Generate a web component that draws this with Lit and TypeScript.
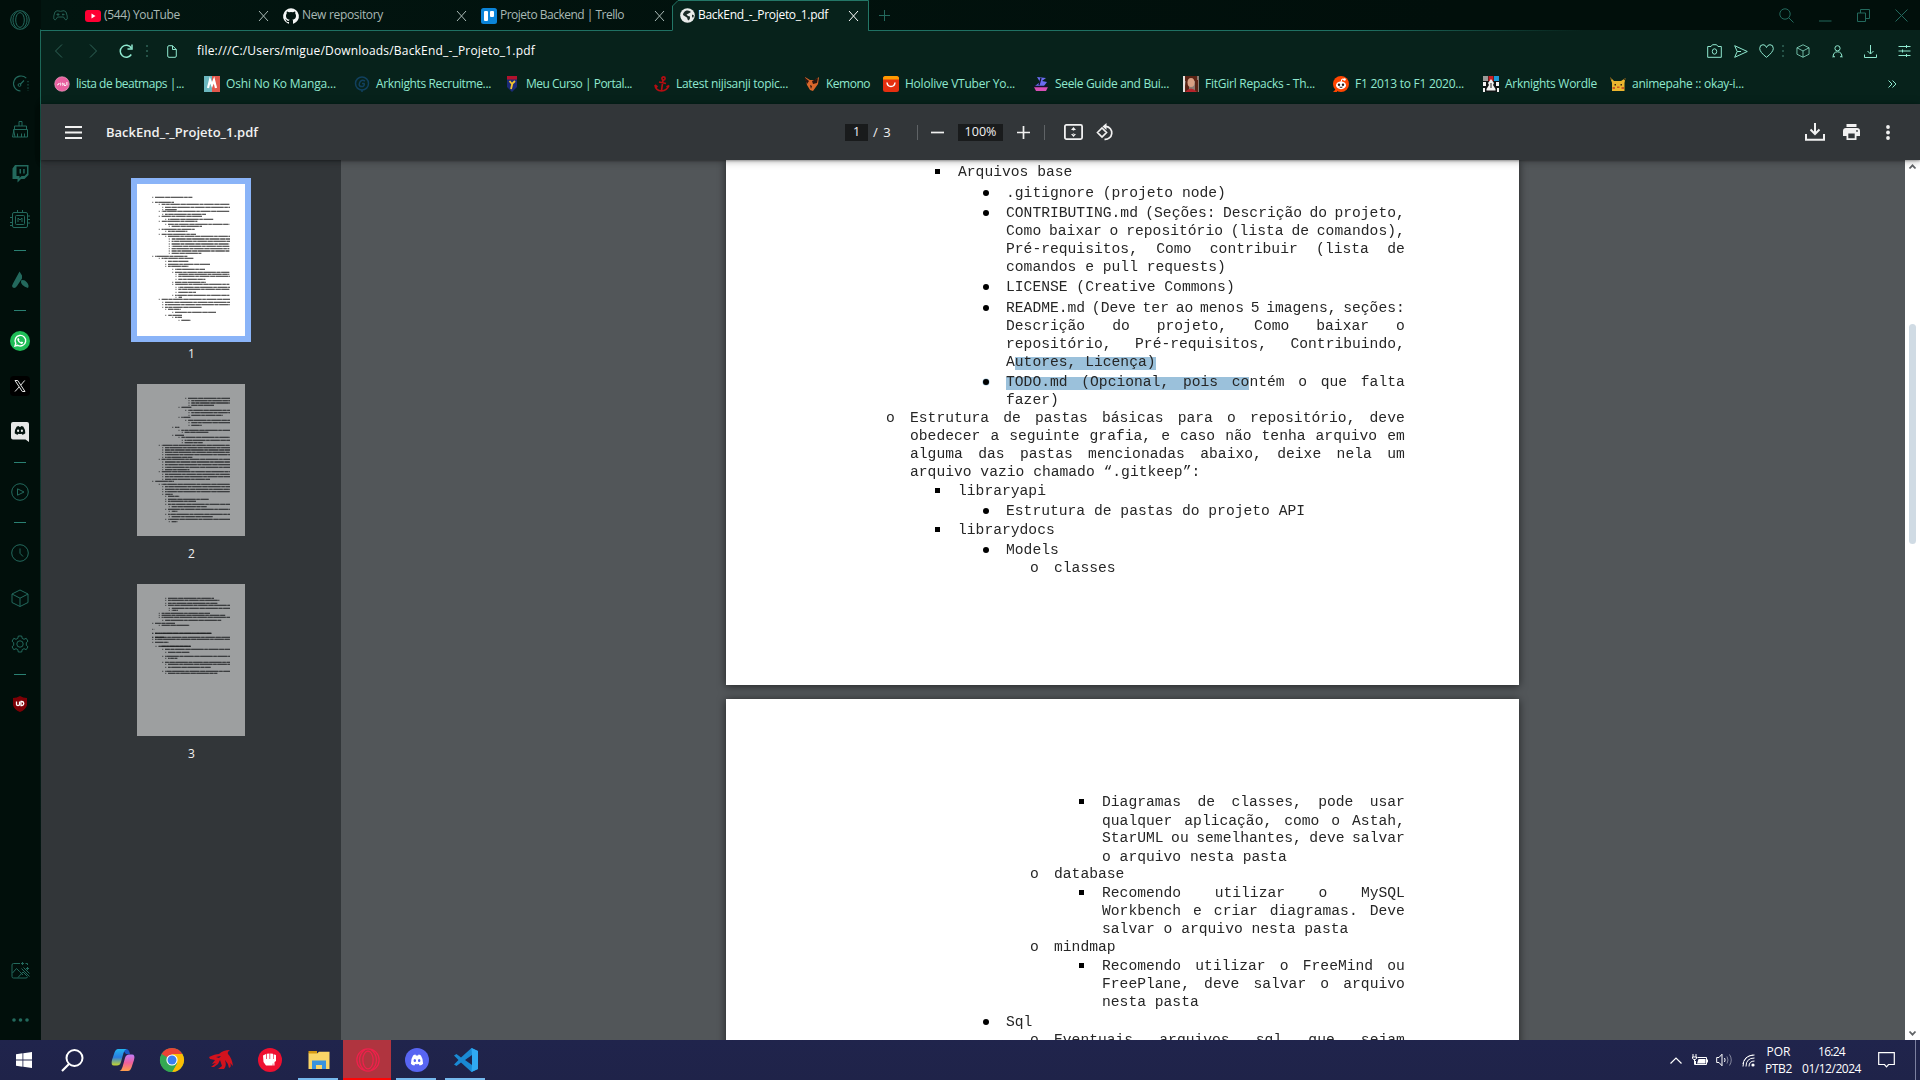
import { LitElement, html, css, svg, nothing } from "lit";
import type { TemplateResult } from "lit";
import { customElement } from "lit/decorators.js";

/* ---------- shared helpers ---------- */

type Art = ReturnType<typeof svg>;

const icon = (w: number, h: number, box: string, art: Art, cls = "") => html`
  <svg class="icon ${cls}" width=${w} height=${h} viewBox=${box} fill="none"
    stroke="currentColor" stroke-width="1">${art}</svg>`;

const fit = (text: string, width: number, cls = "") =>
  html`<span class="fit ${cls}" data-w=${width}>${text}</span>`;

const base = css`
  :host { display: block; box-sizing: border-box; font-family: "Open Sans", "Noto Sans", sans-serif; font-size: 12px; }
  * { box-sizing: border-box; }
  .icon { display: block; flex: none; overflow: visible; }
  .fit { display: block; white-space: nowrap; flex: none; line-height: 16px; }
`;

/** Spreads labels marked .fit over their stated width by letter spacing. */
class Surface extends LitElement {
  firstUpdated() {
    this.renderRoot.querySelectorAll<HTMLElement>(".fit").forEach((el) => {
      const want = Number(el.dataset.w);
      const range = document.createRange();
      range.selectNodeContents(el);
      const natural = range.getBoundingClientRect().width;
      const n = (el.textContent ?? "").length;
      el.style.letterSpacing = `${((want - natural) / n).toFixed(3)}px`;
      el.style.width = `${want}px`;
    });
  }
}

const closeX = svg`<path d="M1 1L10 11M10 1L1 11"/>`;
const cube = svg`<path d="M9 1L17 5V13.500L9 17.500L1 13.500V5ZM1 5L9 9.200L17 5M9 9.200V17.500"/>`;
const discordFace = svg`<path stroke="none" fill="currentColor" fill-rule="evenodd" d="M5 2.500Q6.500 1.700 8 1.500L8.600 2.600H11.400L12 1.500Q13.500 1.700 15 2.500Q18.200 7 17.800 12.300Q16 14 13.400 14.500L12.300 12.800Q10 13.400 7.700 12.800L6.600 14.500Q4 14 2.200 12.300Q1.800 7 5 2.500ZM7.200 6.700A1.600 1.800 0 1 0 7.210 10.300A1.600 1.800 0 1 0 7.200 6.700ZM12.800 6.700A1.600 1.800 0 1 0 12.810 10.300A1.600 1.800 0 1 0 12.800 6.700Z"/>`;
const operaMark = svg`<circle cx="10" cy="10" r="9.300"/><ellipse cx="10" cy="10" rx="4.300" ry="7.400"/><path d="M12.500 1.200Q17 4.500 17 10T12.500 18.800M7.500 1.200Q3 4.500 3 10T7.500 18.800"/>`;

/* ---------- left browser rail ---------- */

const rail: (TemplateResult | null)[] = [
  icon(17, 17, "0 0 17 17", svg`<path d="M8.500 16A7.500 7.500 0 1 1 14.300 3.200M8 9.500L12 5.500" stroke-width="1.100"/><circle cx="7.500" cy="10" r="1.400"/><path d="M16 6V16" stroke-dasharray="1.300 1.900"/>`),
  icon(17, 17, "0 0 17 17", svg`<path d="M2.500 8.500V5H14.500V8.500M1.500 8.500H15.500V16H3L1.500 8.500M7 5V.500H10V5M5.500 16V12.500M9.500 16V12.500M12.500 16V12.500M2 8.500L.500 16H3"/>`),
  icon(17, 18, "0 0 17 18", svg`<path stroke="none" fill="currentColor" fill-rule="evenodd" d="M3 0H16.500V10L12.500 14H9L5.500 17.500V14H.500V3.500ZM4.500 1.500V11H7.500V13L9.500 11H12.500L15 8.500V1.500ZM7.500 4H9V8.500H7.500ZM11.200 4H12.700V8.500H11.200Z"/>`),
  icon(20, 20, "0 0 20 20", svg`<rect x="2.500" y="2.500" width="15" height="15" rx="1.500"/><rect x="5.500" y="5.500" width="9" height="9" rx="1"/><path d="M8 12V8L10 10L12 8V12M7.500 0V2.500M12.500 0V2.500M4.500 17.500H8M0 7.500H2.500M0 12.500H2.500M17.500 6H20M17.500 9.500H20M17.500 13H20M0 15.500H2"/>`),
  null,
  icon(17, 18, "0 0 17 18", svg`<path stroke="none" fill="currentColor" d="M7.500.500L10 4.500V7.500L5 15Q3 17.800.800 16.500Q-.500 14.500 1 12.500ZM9 9.500Q12 8 15 11.500Q17.500 14.500 16 17Q12.500 16 10.500 14Q8.500 12 9 9.500Z"/>`),
  null,
  icon(20, 20, "0 0 20 20", svg`<circle cx="10" cy="10" r="10" fill="#1fbd57" stroke="none"/><path stroke="#fff" stroke-width="1.400" d="M5 15L5.800 12.300A5.300 5.300 0 1 1 7.800 14.300Z"/><path stroke="none" fill="#fff" d="M7.800 7.200L8.700 7L9.500 8.700L9 9.400Q9.700 10.700 11 11.200L11.700 10.500L13.200 11.300Q13 13 11.300 12.900Q8.200 12 7.300 9Q7.100 8 7.800 7.200Z"/>`),
  icon(20, 20, "0 0 20 20", svg`<rect width="20" height="20" rx="4" fill="#000" stroke="none"/><path stroke="#e8e8e8" stroke-width="1" d="M5 4.500H7.700L15 15.500H12.300ZM14.700 4.500L10.700 9.200M9.200 10.900L5 15.500"/>`),
  icon(18, 20, "0 0 18 20", svg`<path stroke="none" fill="#e6e8e7" d="M2 0H16Q18 0 18 2V20L14.500 17.500H2Q0 17.500 0 15.500V2Q0 0 2 0Z"/><g color="#04140f" transform="translate(2.200 3) scale(.68)">${discordFace}</g>`),
  null,
  icon(18, 18, "0 0 18 18", svg`<circle cx="9" cy="9" r="8.300"/><path d="M6.500 5.800V12.200L13 9Z"/>`),
  null,
  icon(18, 18, "0 0 18 18", svg`<circle cx="9" cy="9" r="8.300"/><path d="M9 4.500V9.300L12 12.500"/>`),
  icon(18, 18.500, "0 0 18 18.500", cube),
  icon(18, 18, "0 0 18 18", svg`<circle cx="9" cy="9" r="3.200"/><path d="M7.300 1H10.700L11.200 3.400L13 4.300L15.200 3.300L17 6.200L15.300 7.700V10.300L17 11.800L15.200 14.700L13 13.700L11.200 14.600L10.700 17H7.300L6.800 14.600L5 13.700L2.800 14.700L1 11.800L2.700 10.300V7.700L1 6.200L2.800 3.300L5 4.300L6.800 3.400Z" stroke-linejoin="round"/>`),
  null,
  icon(14, 16, "0 0 14 16", svg`<path stroke="none" fill="#7d0006" d="M7 0Q10 1.800 14 2V9Q13 13.500 7 16Q1 13.500 0 9V2Q4 1.800 7 0Z"/><path stroke="#fff" stroke-width="1.300" d="M3.500 5.500V8.500Q3.500 9.500 5 9.500T6.500 8.500V5.500M8 5.500V9.500H9Q10.800 9.300 10.800 7.500T9 5.500Z"/>`),
];

@customElement("side-rail")
class SideRail extends Surface {
  static styles = [base, css`
    :host { width: 41px; height: 1040px; display: flex; flex-direction: column; background: #010f0b; color: #23695d;
      border-right: 1px solid; border-image: linear-gradient(#010f0b 0 30px, #1d6b5b 31px, #16453c 300px, #0a2a23 600px, #02110d 900px) 1; }
    .brand { height: 40px; display: flex; align-items: center; justify-content: center; margin-bottom: 21px; }
    .slot { height: 45.400px; display: flex; align-items: center; justify-content: center; flex: none; }
    .rule { height: 15.200px; display: flex; align-items: center; justify-content: center; flex: none; }
    .rule::before { content: ""; width: 12px; height: 1px; background: #2a8072; }
    .foot { margin-top: auto; display: flex; flex-direction: column; align-items: center; gap: 39px; padding-bottom: 18px; }
  `];
  render() {
    return html`
      <div class="brand">${icon(20, 20, "0 0 20 20", operaMark)}</div>
      ${rail.map((r) => (r ? html`<div class="slot">${r}</div>` : html`<div class="rule"></div>`))}
      <div class="foot">
        ${icon(19, 17, "0 0 19 17", svg`<path d="M9 1.500H2.500Q1 1.500 1 3V14.500Q1 16 2.500 16H15Q16.500 16 16.500 14.500M1.500 11L5.500 6.500L8.500 9.500L12 13M7 15.500L12 10L16 14M10.500 6.500L18.500 14.500M12.500 5.500L18.500 11.500M11.500 0V3M10 1.500H13M14.500 1.500H16.500V3M16.500 5V8M15 6.500H18"/>`)}
        ${icon(17, 4, "0 0 17 4", svg`<g stroke="none" fill="currentColor"><circle cx="2" cy="2" r="1.800"/><circle cx="8.500" cy="2" r="1.800"/><circle cx="15" cy="2" r="1.800"/></g>`)}
      </div>`;
  }
}

/* ---------- tabs, address bar and bookmarks ---------- */

const globe = svg`<circle cx="7.500" cy="7.500" r="7.300" fill="#e9eceb" stroke="none"/><path stroke="none" fill="#1b2b27" d="M6.500 2.500Q9.500 2 11 4L8.500 5.500L6.500 6.500L8 8L10 8.500Q10.500 10.500 8.500 12.500Q7 11.500 7.200 9.800L3 7Q3 4 6.500 2.500ZM12 6.500L14 7.500L13 10Q11.500 8.500 12 6.500Z"/>`;

const tabs = [
  { text: "(544) YouTube", w: 76, art: svg`<rect x="0" y="2" width="16" height="12" rx="3" fill="#ff0033" stroke="none"/><path d="M6.500 5.500L10.500 8L6.500 10.500Z" fill="#fff" stroke="none"/>` },
  { text: "New repository", w: 81, art: svg`<path stroke="none" fill="#f4f6f5" d="M8 .300A7.900 7.900 0 0 0 5.500 15.700C5.900 15.800 6 15.500 6 15.300V13.900C3.800 14.400 3.300 12.900 3.300 12.900C3 12 2.500 11.700 2.500 11.700C1.700 11.200 2.500 11.200 2.500 11.200C3.300 11.200 3.700 12 3.700 12C4.400 13.200 5.600 12.900 6.100 12.700C6.100 12.200 6.300 11.800 6.600 11.600C4.800 11.400 3 10.700 3 7.700C3 6.800 3.300 6.100 3.800 5.500C3.700 5.300 3.500 4.500 3.900 3.400C3.900 3.400 4.600 3.200 6.100 4.200A7.500 7.500 0 0 1 9.900 4.200C11.400 3.200 12.100 3.400 12.100 3.400C12.500 4.500 12.300 5.300 12.200 5.500C12.700 6.100 13 6.800 13 7.700C13 10.700 11.200 11.400 9.400 11.600C9.700 11.800 10 12.300 10 13.100V15.300C10 15.500 10.100 15.800 10.500 15.700A7.900 7.900 0 0 0 8 .300Z"/>` },
  { text: "Projeto Backend | Trello", w: 124, art: svg`<rect width="16" height="16" rx="2.500" fill="#0b84d8" stroke="none"/><rect x="3" y="3" width="4" height="10" rx="1" fill="#fff" stroke="none"/><rect x="9" y="3" width="4" height="6" rx="1" fill="#fff" stroke="none"/>` },
];

const marks = [
  { text: "lista de beatmaps |...", w: 108, art: svg`<circle cx="8" cy="8" r="7.300" fill="#e8609f" stroke="#f7a9cb" stroke-width=".6"/><path stroke="#fff" stroke-width="1" d="M3 8.500A1 1 0 1 0 4.500 7M6.800 7Q5.200 7.300 6.400 8T6 9.400M9 7Q7.400 7.300 8.600 8T8.200 9.400M10 7V9.400H12M12.900 6V9.400"/>` },
  { text: "Oshi No Ko Manga...", w: 110, art: svg`<rect width="8" height="16" fill="#6cb8c0" stroke="none"/><rect x="8" width="8" height="16" fill="#e2574c" stroke="none"/><path stroke="#fff" stroke-width="2.200" d="M4 12L6 4L8 9L10 4L12 12"/>` },
  { text: "Arknights Recruitme...", w: 115, art: svg`<g stroke="#11405e" stroke-width="1.500"><circle cx="8" cy="7.500" r="6.500"/><path d="M11 5Q7 3 5.500 7T9 10.500Q11 9 10 7.500H8M8 14V16"/></g>` },
  { text: "Meu Curso | Portal...", w: 106, art: svg`<path stroke="none" fill="#1b2a78" d="M3 1H13V11L8 16L3 11Z"/><rect x="3" y="0" width="10" height="3.500" fill="#b3122c" stroke="none"/><path stroke="#f2c330" stroke-width="1.800" d="M5.500 5L8 8L11 5M8.500 7L7 13"/>` },
  { text: "Latest nijisanji topic...", w: 112, art: svg`<g stroke="#b50d12" stroke-width="1.700"><circle cx="9.500" cy="2.500" r="1.600"/><path d="M9 4L7.500 14.500M5 6L12 7.500M1 9Q1.500 14.500 7.500 15Q13 14.500 15 9.500M1 9L3.500 11M15 9.500L12.500 11"/></g>` },
  { text: "Kemono", w: 44, art: svg`<path stroke="none" fill="#d9672b" d="M1 1L6 4L11 4L15 1L14 8L9 15L6 14L3 9Z"/><path stroke="none" fill="#2a1510" d="M0 1L5 5L3 8ZM8 5L14 2L13 7L9 8ZM6 9L8 10L7 13Z"/>` },
  { text: "Hololive VTuber Yo...", w: 110, art: svg`<rect width="16" height="16" rx="2.500" fill="#e52f10" stroke="none"/><path d="M0 3.500V2.500Q0 0 2.500 0H13.500Q16 0 16 2.500V3.500Z" fill="#ff9b00" stroke="none"/><path stroke="#fff" stroke-width="1.500" d="M4 6.500Q4.500 10.500 8 10.500T12 6.500"/>` },
  { text: "Seele Guide and Bui...", w: 114, art: svg`<path stroke="none" fill="#6a6df0" d="M4 1L13 2L9 5L14 6L11 10H2L7 6Z"/><path stroke="none" fill="#d84fb4" d="M1 11H15L13 15H3Z"/><path stroke="#14122e" stroke-width="1.300" d="M8 2L6 9M0 10.500H15"/>` },
  { text: "FitGirl Repacks - Th...", w: 110, art: svg`<rect width="16" height="16" fill="#8a7a70" stroke="none"/><path stroke="none" fill="#5a2415" d="M1 0H14V5H1ZM3 4H6V16H1ZM12 4H15V16H12Z"/><ellipse cx="8" cy="6.500" rx="3.500" ry="4.500" fill="#d9a184" stroke="none"/><path stroke="none" fill="#b5242b" d="M2 16Q8 9 14 16Z"/><path stroke="none" fill="#e6e2de" d="M0 0H2V16H0Z"/>` },
  { text: "F1 2013 to F1 2020...", w: 109, art: svg`<circle cx="8" cy="8" r="8" fill="#ff4500" stroke="none"/><path d="M0 16L4 12V16Z" fill="#ff4500" stroke="none"/><ellipse cx="8" cy="9.300" rx="5" ry="3.900" fill="#fff" stroke="none"/><circle cx="11.500" cy="3.500" r="1.300" fill="#fff" stroke="none"/><path stroke="#fff" d="M8 6L9 3L11 3.500"/><g fill="#2a1a16" stroke="none"><circle cx="6" cy="8.800" r="1.200"/><circle cx="10" cy="8.800" r="1.200"/><path d="M5.800 10.800H10.200Q8 13 5.800 10.800Z"/></g>` },
  { text: "Arknights Wordle", w: 92, art: svg`<g stroke="none"><rect width="16" height="16" fill="#101414"/><rect width="5" height="5" fill="#9a9a98"/><rect x="5.500" width="5" height="5" fill="#c81f25"/><rect x="11" width="5" height="5" fill="#1a9ad6"/><path fill="#f2f2f0" d="M8 3L11 7L10 9L12.500 13V14.500H3.500V13L6 9L5 7ZM0 6H3V10H0ZM13 6H16V10H13ZM0 12H2V16H0ZM14 12H16V16H14Z"/><path fill="#222" d="M7.500 7H8.500V12H7.500Z"/></g>` },
  { text: "animepahe :: okay-i...", w: 112, art: svg`<path stroke="none" fill="#ecb62e" d="M0 1L4 5H11L15.500 2L14.500 7V15H2V7Z"/><path stroke="none" fill="#3c2a14" d="M0 1L2 3L1 4ZM15.500 2L13.500 3.200L15 4.500ZM4.500 8H6V9.500H4.500ZM10.500 8H12V9.500H10.500Z"/><path stroke="none" fill="#cf5d20" d="M2.500 11H5V13H2.500ZM11.500 11H14V13H11.500ZM7 10.500H9.500V12H7Z"/>` },
];

@customElement("browser-chrome")
class BrowserChrome extends Surface {
  static styles = [base, css`
    :host { height: 104px; background: #07221b; color: #8fe8cf; display: flex; flex-direction: column; }
    .tabs { height: 31px; display: flex; background: linear-gradient(90deg, #021510, #010f0b 75%); color: #a9b9b5; position: relative; }
    .tabs::after { content: ""; position: absolute; left: 0; right: 0; bottom: 0; height: 1px; background: linear-gradient(90deg, #1f7163 0 70%, #07221b 82%); }
    .pad { width: 38px; display: flex; align-items: center; justify-content: center; color: #235c50; }
    .tab { width: 198px; display: flex; align-items: center; gap: 3px; padding: 0 8px 0 6px; }
    .tab .shut { margin-left: auto; }
    .active { width: 197px; color: #fff; position: relative; z-index: 1; padding: 0 11px 0 7px; gap: 3px; }
    .outline { position: absolute; left: -1px; top: 0; color: #237767; }
    .active > :not(.outline) { position: relative; }
    .new { width: 28px; display: flex; align-items: center; justify-content: center; color: #23695d; }
    .win { margin-left: auto; display: flex; align-items: center; color: #23695d; padding-right: 12px; }
    .win .icon + .icon { margin-left: 25px; }
    .addr { height: 40px; display: flex; align-items: center; padding: 0 9px 0 13px; }
    .dim { color: #306458; }
    .url { color: #fff; margin-left: 20px; }
    .tools { margin-left: auto; display: flex; align-items: center; }
    .marks { height: 28px; display: grid; grid-template-columns: 150px 150px 150px 150px 150px 79px 150px 150px 150px 150px 127px 1fr auto; align-items: center; padding: 0 23px 2px 13px; }
    .mark { display: flex; align-items: center; gap: 6px; }
    .fit { padding-bottom: 1px; }
  `];
  render() {
    return html`
      <div class="tabs">
        <div class="pad">${icon(15, 11, "0 0 15 11", svg`<path d="M4 .700Q7.500 2 11 .700Q13.500 .700 14.200 6Q14.800 10 13 10Q12 10 10.500 7H4.500Q3 10 2 10Q.200 10 .800 6Q1.500 .700 4 .700ZM3.500 4.500H6.500M5 3V6M10 3.500V5.500M9 4.500H11.500"/>`)}</div>
        ${tabs.map((t) => html`<div class="tab">${icon(16, 16, "0 0 16 16", t.art)}${fit(t.text, t.w)}${icon(11, 12, "0 0 11 12", closeX, "shut")}</div>`)}
        <div class="tab active">
          <svg class="outline" width="198" height="31" viewBox="0 0 198 31"><path d="M0 31V30.500Q.500 30.500 .500 29V6L6 .500H196.500V30.500" fill="#07221b" stroke="currentColor"/><path d="M1 31V30H196V31Z" fill="#07221b"/></svg>
          ${icon(15, 15, "0 0 15 15", globe)}${fit("BackEnd_-_Projeto_1.pdf", 130)}${icon(11, 12, "0 0 11 12", closeX, "shut")}
        </div>
        <div class="new">${icon(11, 11, "0 0 11 11", svg`<path d="M5.500 0V11M0 5.500H11"/>`)}</div>
        <div class="win">
          ${icon(15, 15, "0 0 15 15", svg`<circle cx="6" cy="6" r="5.200"/><path d="M9.700 9.700L14.500 14.500"/>`)}
          ${icon(13, 13, "0 0 13 13", svg`<path d="M0 12H12.500"/>`)}
          ${icon(13, 13, "0 0 13 13", svg`<path d="M.500 4H8.500V12.500H.500ZM3.500 4V.500H12.500V9.500H8.500"/>`)}
          ${icon(13, 13, "0 0 13 13", svg`<path d="M.500.500L12.500 12.500M12.500.500L.500 12.500"/>`)}
        </div>
      </div>
      <div class="addr">
        <div class="dim">${icon(10, 14, "0 0 10 14", svg`<path d="M8 .500L1.500 7L8 13.500"/>`)}</div>
        <div class="dim" style="margin-left:24px">${icon(10, 14, "0 0 10 14", svg`<path d="M2 .500L8.500 7L2 13.500"/>`)}</div>
        <div style="margin-left:21px">${icon(14, 14, "0 0 14 14", svg`<path d="M12.300 10.500A6 6 0 1 1 12.300 4" stroke-width="1.500"/><path d="M13 .500V5H8.500" stroke-width="1.500"/>`)}</div>
        <div class="dim" style="margin-left:13px">${icon(2, 12, "0 0 2 12", svg`<path d="M1 0V12" stroke-width="1.500" stroke-dasharray="2 3"/>`)}</div>
        <div style="margin-left:19px">${icon(10, 13, "0 0 10 13", svg`<path d="M5.500 .700H2Q.700 .700 .700 2V11Q.700 12.300 2 12.300H8Q9.300 12.300 9.300 11V4.500L5.500 .700V4.500H9.300"/>`)}</div>
        <div class="url">${fit("file:///C:/Users/migue/Downloads/BackEnd_-_Projeto_1.pdf", 338)}</div>
        <div class="tools">
          ${icon(15, 14, "0 0 15 14", svg`<path d="M.700 2.500H4L5.500 .700H9.500L11 2.500H14.300V13.300H.700Z"/><ellipse cx="7.500" cy="7.500" rx="2.200" ry="2.700"/>`)}
          <div style="margin-left:12px">${icon(14, 13, "0 0 14 13", svg`<path d="M.700 .700L13.300 6.500L.700 12.300L3.200 6.500ZM3.200 6.500H7"/>`)}</div>
          <div style="margin-left:11px">${icon(15, 14, "0 0 15 14", svg`<path d="M7.500 13.300Q.700 8 .700 4.500Q.700 .700 4 .700Q6.500 .700 7.500 3.500Q8.500 .700 11 .700Q14.300 .700 14.300 4.500Q14.300 8 7.500 13.300Z"/>`)}</div>
          <div class="dim" style="margin-left:8px">${icon(2, 12, "0 0 2 12", svg`<path d="M1 0V12" stroke-width="1.500" stroke-dasharray="2 3"/>`)}</div>
          <div style="margin-left:12px">${icon(14, 14, "0 0 18 18.500", cube)}</div>
          <div style="margin-left:22px">${icon(11, 13, "0 0 11 13", svg`<circle cx="5.500" cy="3.300" r="2.600"/><path d="M1 12.500Q1 6.800 5.500 6.800T10 12.500M1 11L3 12M10 11L8 12"/>`)}</div>
          <div style="margin-left:21px">${icon(13, 13, "0 0 13 13", svg`<path d="M6.500 0V9M3.500 6L6.500 9L9.500 6M.500 9.500V12.500H12.500V9.500"/>`)}</div>
          <div style="margin-left:21px">${icon(13, 12, "0 0 13 12", svg`<path d="M.500 1.500H12.500M.500 6H12.500M.500 10.500H12.500M8.500 0V3M4.500 4.500V7.500M8.500 9V12"/>`)}</div>
        </div>
      </div>
      <div class="marks">
        ${marks.map((m) => html`<div class="mark">${icon(16, 16, "0 0 16 16", m.art)}${fit(m.text, m.w)}</div>`)}
        ${icon(9, 8, "0 0 9 8", svg`<path d="M.500 .500L4 4L.500 7.500M4.500 .500L8 4L4.500 7.500"/>`)}
      </div>`;
  }
}

/* ---------- document viewer ---------- */

@customElement("pdf-toolbar")
class PdfToolbar extends Surface {
  static styles = [base, css`
    :host { height: 56px; background: #323639; color: #f1f1f1; display: grid; grid-template-columns: 1fr auto 1fr; align-items: center;
      padding: 0 28px 0 24px; position: relative; z-index: 2; box-shadow: 0 -2px 8px rgba(0,0,0,.09), 0 4px 8px rgba(0,0,0,.06), 0 1px 2px rgba(0,0,0,.3), 0 2px 6px rgba(0,0,0,.15); }
    .left, .mid, .right { display: flex; align-items: center; }
    .left { gap: 24px; font-size: 13px; font-weight: 600; }
    .mid { padding-left: 2px; }
    .right { justify-content: flex-end; gap: 18px; }
    .box { background: #191b1c; height: 17px; display: flex; align-items: center; justify-content: center; font-size: 12.500px; }
    .page { width: 23px; }
    .zoom { width: 45px; margin: 0 14px; }
    .of { margin: 0 24px 0 5px; font-size: 13px; }
    .bar { width: 1px; height: 15px; background: #5f6366; }
  `];
  render() {
    return html`
      <div class="left">
        ${icon(17, 13, "0 0 17 13", svg`<path d="M0 1H17M0 6.500H17M0 12H17" stroke-width="2"/>`)}
        ${fit("BackEnd_-_Projeto_1.pdf", 152)}
      </div>
      <div class="mid">
        <div class="box page">${fit("1", 7)}</div>
        <div class="of">${fit("/  3", 20)}</div>
        <div class="bar"></div>
        <div style="margin-left:13px">${icon(13, 13, "0 0 13 13", svg`<path d="M0 6.500H13" stroke-width="1.700"/>`)}</div>
        <div class="box zoom">${fit("100%", 32)}</div>
        ${icon(13, 13, "0 0 13 13", svg`<path d="M0 6.500H13M6.500 0V13" stroke-width="1.700"/>`)}
        <div class="bar" style="margin:0 19px 0 14px"></div>
        ${icon(19, 16, "0 0 19 16", svg`<rect x=".9" y=".9" width="17.200" height="14.200" rx="1.500" stroke-width="1.800"/><path stroke="none" fill="currentColor" d="M9.500 3L12 6H7ZM9.500 13L12 10H7ZM8.800 5.500H10.200V6.500H8.800ZM8.800 9.500H10.200V10.500H8.800Z"/>`)}
        <div style="margin-left:13px">${icon(18, 18, "0 0 18 18", svg`<path d="M1.500 9.500L6 5L10.500 9.500L6 14ZM10 3.300A6.500 6.500 0 1 1 8.500 16.300" stroke-width="1.700"/><path stroke="none" fill="currentColor" d="M6.500 3.500L10.500 0V7Z"/>`)}</div>
      </div>
      <div class="right">
        ${icon(20, 18, "0 0 20 18", svg`<path d="M10 0V10.500M5.500 6.500L10 11L14.500 6.500M1 11V16.800H19V11" stroke-width="2"/>`)}
        ${icon(17, 16, "0 0 17 16", svg`<path stroke="none" fill="currentColor" fill-rule="evenodd" d="M3.500 0H13.500V3H3.500ZM3 4H14Q17 4 17 7V12H13.500V16H3.500V12H0V7Q0 4 3 4ZM5.300 9.500V14.200H11.700V9.500ZM14 6A.900.900 0 1 0 14.010 7.800A.900.900 0 1 0 14 6Z"/>`)}
        <div style="margin:0 2px 0 8px">${icon(4, 15, "0 0 4 15", svg`<g stroke="none" fill="currentColor"><circle cx="2" cy="2" r="1.900"/><circle cx="2" cy="7.500" r="1.900"/><circle cx="2" cy="13" r="1.900"/></g>`)}</div>
      </div>`;
  }
}

/* Each entry: left edge, right edge and height of a text line on the sheet. */
const sheets: [number, number, number][][] = [
  [[456,577,112],[456,522,127],[476,688,133],[486,690,142],[486,530,149],[476,688,154],[486,618,163],[476,606,169],[495,640,178],[476,592,184],[495,688,193],[506,606,199],[476,584,208],[495,562,214],[476,588,223],[495,690,229],[506,690,237],[506,690,244],[506,688,252],[506,688,259],[506,688,266],[506,688,273],[506,604,280],[456,562,289],[476,580,295],[495,565,304],[495,630,313],[495,565,319],[516,615,328],[516,688,337],[526,688,343],[526,690,349],[526,616,358],[516,618,367],[516,688,373],[526,690,382],[526,688,388],[526,588,397],[516,688,406],[526,546,412],[476,690,418],[486,690,427],[486,690,434],[486,605,442],[495,542,448],[516,648,457],[495,546,466],[516,546,472],[535,572,481]],
  [[555,690,715],[565,690,722],[565,690,729],[565,642,736],[535,574,742],[555,690,751],[565,690,758],[565,668,766],[535,571,772],[555,690,781],[565,690,788],[565,605,796],[516,538,802],[535,690,811],[545,625,817],[516,552,826],[535,690,832],[545,690,841],[545,608,848],[476,690,856],[486,690,863],[486,690,870],[486,690,877],[486,690,884],[486,577,892],[476,690,898],[486,690,906],[486,690,914],[486,690,922],[486,568,929],[476,690,935],[486,690,943],[486,690,950],[486,630,958],[456,522,964],[476,690,973],[486,690,980],[486,690,988],[486,690,995],[486,518,1003],[495,538,1009],[495,626,1018],[495,588,1024],[495,690,1033],[506,620,1040],[495,690,1048],[506,532,1054],[495,690,1063],[506,638,1070],[495,690,1078],[506,532,1085]],
  [[495,642,715],[495,658,721],[495,652,730],[495,690,736],[506,690,745],[506,534,751],[476,630,760],[476,676,766],[476,690,772],[486,664,781],[456,525,790],[476,568,796],[456,464,808],[456,634,820],[456,634,820],[456,690,832],[456,492,832],[456,690,838],[456,506,847],[466,572,859],[476,572,859],[486,690,868],[495,568,877],[486,690,889],[495,532,895],[486,690,907],[495,690,913],[495,632,922],[486,690,934],[495,652,940]],
];

@customElement("page-thumbs")
class PageThumbs extends Surface {
  static styles = [base, css`
    :host { width: 300px; background: #323639; color: #f1f1f1; display: flex; flex-direction: column; align-items: center; padding-top: 18px; }
    .thumb { display: flex; flex-direction: column; align-items: center; height: 200px; }
    .frame { border: 6px solid transparent; line-height: 0; }
    .on { border-color: #8ab4f8; }
    .sheet { display: block; background: #fff; }
    .frame:not(.on) .sheet { opacity: .52; }
    .num { margin-top: 4px; font-size: 12px; }
  `];
  render() {
    return html`${sheets.map((lines, i) => html`
      <div class="thumb">
        <div class="frame ${i === 0 ? "on" : ""}">
          <svg class="sheet" width="108" height="152" viewBox="411 ${i === 0 ? 72 : 672} 324 456">
            ${lines.map(([a, b, y], n) => svg`<path d="M${a} ${y}H${b}" stroke="#000" stroke-opacity=${i ? 0.5 : 0.42} stroke-width="4" stroke-dasharray="4 5 400"  stroke-dashoffset="0"/><path d="M${a + 9} ${y}H${b}" stroke="#000" stroke-opacity=${i ? 0.45 : 0.38} stroke-width="4" stroke-dasharray="27 4 14 3 36 4 9 4" stroke-dashoffset=${(n * 37) % 101}/>`)}
          </svg>
        </div>
        <div class="num">${fit(String(i + 1), 6)}</div>
      </div>`)}`;
  }
}

type Mark = "o" | "square" | "dot" | "";
interface Line { lv: number; m?: Mark; t: string; next: number; full?: boolean; sel?: [number, number]; selMark?: boolean }

const pageOne: Line[] = [
  { lv: 1, m: "square", t: "Arquivos base", next: 21 },
  { lv: 2, m: "dot", t: ".gitignore (projeto node)", next: 20 },
  { lv: 2, m: "dot", t: "CONTRIBUTING.md (Seções: Descrição do projeto,", next: 18, full: true },
  { lv: 2, t: "Como baixar o repositório (lista de comandos),", next: 18, full: true },
  { lv: 2, t: "Pré-requisitos, Como contribuir (lista de", next: 18, full: true },
  { lv: 2, t: "comandos e pull requests)", next: 20 },
  { lv: 2, m: "dot", t: "LICENSE (Creative Commons)", next: 21 },
  { lv: 2, m: "dot", t: "README.md (Deve ter ao menos 5 imagens, seções:", next: 18, full: true },
  { lv: 2, t: "Descrição do projeto, Como baixar o", next: 18, full: true },
  { lv: 2, t: "repositório, Pré-requisitos, Contribuindo,", next: 18, full: true },
  { lv: 2, t: "Autores, Licença)", next: 20, sel: [1, 17] },
  { lv: 2, m: "dot", t: "TODO.md (Opcional, pois contém o que falta", next: 18, full: true, sel: [0, 26], selMark: true },
  { lv: 2, t: "fazer)", next: 18 },
  { lv: 0, m: "o", t: "Estrutura de pastas básicas para o repositório, deve", next: 18, full: true },
  { lv: 0, t: "obedecer a seguinte grafia, e caso não tenha arquivo em", next: 18, full: true },
  { lv: 0, t: "alguma das pastas mencionadas abaixo, deixe nela um", next: 18, full: true },
  { lv: 0, t: "arquivo vazio chamado “.gitkeep”:", next: 19 },
  { lv: 1, m: "square", t: "libraryapi", next: 20 },
  { lv: 2, m: "dot", t: "Estrutura de pastas do projeto API", next: 19 },
  { lv: 1, m: "square", t: "librarydocs", next: 20 },
  { lv: 2, m: "dot", t: "Models", next: 18 },
  { lv: 3, m: "o", t: "classes", next: 18 },
];

const pageTwo: Line[] = [
  { lv: 4, m: "square", t: "Diagramas de classes, pode usar", next: 19, full: true },
  { lv: 4, t: "qualquer aplicação, como o Astah,", next: 17, full: true },
  { lv: 4, t: "StarUML ou semelhantes, deve salvar", next: 19, full: true },
  { lv: 4, t: "o arquivo nesta pasta", next: 17 },
  { lv: 3, m: "o", t: "database", next: 19 },
  { lv: 4, m: "square", t: "Recomendo utilizar o MySQL", next: 18, full: true },
  { lv: 4, t: "Workbench e criar diagramas. Deve", next: 18, full: true },
  { lv: 4, t: "salvar o arquivo nesta pasta", next: 18 },
  { lv: 3, m: "o", t: "mindmap", next: 19 },
  { lv: 4, m: "square", t: "Recomendo utilizar o FreeMind ou", next: 18, full: true },
  { lv: 4, t: "FreePlane, deve salvar o arquivo", next: 18, full: true },
  { lv: 4, t: "nesta pasta", next: 20 },
  { lv: 2, m: "dot", t: "Sql", next: 18 },
  { lv: 3, m: "o", t: "Eventuais arquivos sql que sejam", next: 18, full: true },
];

const CHAR = 8.8;
const TEXT_WIDTH = 495;
const INDENT = 48;

@customElement("pdf-pages")
class PdfPages extends Surface {
  static styles = [base, css`
    :host { flex: 1; background: #525659; overflow: hidden; height: 880px; }
    .page { width: 793px; margin-left: 385px; background: #fff; overflow: hidden; padding-left: 160px; }
    .one { height: 525px; padding-top: 3px; }
    .two { height: 1100px; margin-top: 14px; padding-top: 94px; }
    .wrap { box-shadow: 0 1px 8px 1px rgba(0,0,0,.5); width: 793px; }
    .shade { filter: drop-shadow(0 1px 4px rgba(0,0,0,.6)); }
    .line { display: flex; font: 14.667px/18px "Liberation Mono", monospace; color: #262626; white-space: pre; }
    .mk { width: 24px; height: 18px; flex: none; }
    .square::before, .dot::before { content: ""; display: block; background: #000; }
    .square::before { width: 5px; height: 5px; margin: 6px 0 0 1px; }
    .dot::before { width: 6px; height: 6px; border-radius: 50%; margin: 6px 0 0 .500px; }
    .dot.sel::before { box-shadow: 0 0 0 .500px #99c0da; }
    .hl { background: linear-gradient(#9bc1db, #9bc1db) 0 3px / 100% 13px no-repeat; }
  `];
  private line(l: Line) {
    const gaps = l.t.split(" ").length - 1;
    const room = TEXT_WIDTH - l.lv * INDENT;
    const ws = l.full ? (room - l.t.length * CHAR) / gaps : 0;
    const body = l.sel
      ? html`${l.t.slice(0, l.sel[0])}<span class="hl">${l.t.slice(...l.sel)}</span>${l.t.slice(l.sel[1])}`
      : l.t;
    return html`<div class="line" style="height:${l.next}px;padding-left:${l.lv * INDENT}px;word-spacing:${ws.toFixed(3)}px"><span
      class="mk ${l.m ?? ""} ${l.selMark ? "sel" : ""}">${l.m === "o" ? "o" : nothing}</span><span>${body}</span></div>`;
  }
  render() {
    return html`<div class="shade">
      <div class="page one">${pageOne.map((l) => this.line(l))}</div>
      <div class="page two">${pageTwo.map((l) => this.line(l))}</div>
    </div>`;
  }
}

@customElement("scroll-track")
class ScrollTrack extends LitElement {
  static styles = [base, css`
    :host { width: 15px; background: #fff; display: flex; flex-direction: column; align-items: center; padding: 4px 0; color: #606366; }
    .grip { width: 7px; height: 220px; border-radius: 4px; background: #d0dbe4; margin-top: 155px; }
    .down { margin-top: auto; }
  `];
  render() {
    return html`
      ${icon(7, 5, "0 0 7 5", svg`<path d="M.500 4.500L3.500 1.300L6.500 4.500" stroke-width="1.800"/>`)}
      <div class="grip"></div>
      <div class="down">${icon(7, 5, "0 0 7 5", svg`<path d="M.500 .500L3.500 3.700L6.500 .500" stroke-width="1.800"/>`)}</div>`;
  }
}

/* ---------- taskbar ---------- */

const apps: { art: TemplateResult; state?: string }[] = [
  { art: icon(24, 24, "0 0 24 24", svg`<defs><linearGradient id="ca" x1="0" y1="0" x2="0" y2="1"><stop offset="0" stop-color="#23b4f0"/><stop offset=".5" stop-color="#2a7de0"/><stop offset="1" stop-color="#c8d62c"/></linearGradient><linearGradient id="cb" x1="0" y1="0" x2="0" y2="1"><stop offset="0" stop-color="#c07cf8"/><stop offset=".5" stop-color="#f0609c"/><stop offset="1" stop-color="#ffa04a"/></linearGradient></defs><path stroke="none" fill="#1b58c8" d="M11 1H15Q18 1 19 6H15Z"/><path stroke="none" fill="url(#ca)" d="M7 1H15.500Q13.500 1.500 12.500 5L10 14Q9 17.500 6 17.500H3Q-.500 17.500 1 12L3.500 4.500Q4.800 1 7 1Z"/><path stroke="none" fill="url(#cb)" d="M17 23H8.500Q10.500 22.500 11.500 19L14 10Q15 6.500 18 6.500H21Q24.500 6.500 23 12L20.500 19.500Q19.200 23 17 23Z"/>`) },
  { art: icon(24, 24, "0 0 24 24", svg`<g stroke="none"><circle cx="12" cy="12" r="12" fill="#34a853"/><path fill="#ea4335" d="M12 12L1.600 6A12 12 0 0 1 22.400 6H12Z"/><path fill="#fbbc04" d="M22.400 6A12 12 0 0 1 12 24L17.200 15L12 6Z"/><path fill="#34a853" d="M1.600 6A12 12 0 0 0 12 24L17.200 15H12L6.800 15Z"/><circle cx="12" cy="12" r="5.600" fill="#fff"/><circle cx="12" cy="12" r="4.500" fill="#3b7ff0"/></g>`) },
  { art: icon(24, 20, "0 0 24 20", svg`<path stroke="none" fill="#d3121d" fill-rule="evenodd" d="M0 7Q6 4 10 4Q14 0 21 0Q18 2 19 4Q23 8 24 16L21 13Q23 17 20 18Q19 13 16 10Q18 16 15 19H9L13 16L11 10L9 14L5 17H2L7 13L3 14L6 10L1 9ZM7 7L10 8L12 6Z"/>`) },
  { art: icon(24, 24, "0 0 24 24", svg`<circle cx="12" cy="12" r="12" fill="#ee1030" stroke="none"/><path stroke="none" fill="#fff" d="M5 7.500L8 6V11H8.700V5.800L11.500 5.500V11H12.200V5.500L15 5.800V11H15.600V6.300L18 7V13L16.500 14V17.500H15.300V15.500H14.700V17.500H8L5.500 14Z"/>`) },
  { state: "open", art: icon(22, 18, "0 0 22 18", svg`<g stroke="none"><path fill="#d79b12" d="M.500 0H9V3H.500Z"/><path fill="#fbd667" d="M.500 2.500H9L11 .800H21.500V18H.500Z"/><path fill="#3a93dd" d="M4 9.500H18V18H14V14H8V18H4Z"/></g>`) },
  { state: "hot", art: icon(24, 24, "0 0 20 20", operaMark) },
  { state: "open", art: icon(24, 24, "0 0 24 24", svg`<circle cx="12" cy="12" r="12" fill="#5865f2" stroke="none"/><g color="#fff" transform="translate(4.200 5.300) scale(.78 .84)">${discordFace}</g>`) },
  { state: "open", art: icon(24, 24, "0 0 24 24", svg`<path stroke="none" fill="#1a8ad4" fill-rule="evenodd" d="M17.500 0L24 3V21L17.500 24L7 14.500L2.500 18L0 16.500L4.500 12L0 7.500L2.500 6L7 9.500ZM18 7L11 12L18 17Z"/><path stroke="none" fill="#30a9f2" d="M17.500 0L24 3V21L17.500 24L18 17V7Z"/>`) },
];

@customElement("task-bar")
class TaskBar extends Surface {
  static styles = [base, css`
    :host { height: 40px; background: linear-gradient(#20244c, #1f2349); color: #fff; display: flex; }
    .slot { width: 48px; display: flex; align-items: center; justify-content: center; position: relative; }
    .app { width: 49px; display: flex; align-items: center; justify-content: center; position: relative; }
    .first { margin-left: 2px; }
    .open::after, .hot::after { content: ""; position: absolute; bottom: 0; left: 4px; right: 5px; height: 2px; background: #76b9ed; }
    .hot { background: linear-gradient(#b0343f, #b0343f) 0 0 / 48px 100% no-repeat; color: #f0204c; }
    .hot::after { left: 0; right: 1px; background: #ff0505; }
    .tray { margin-left: auto; display: flex; align-items: center; }
    .two { display: flex; flex-direction: column; align-items: center; justify-content: center; height: 40px; gap: 1px; }
    .edge { width: 1px; height: 40px; background: #7c80a0; margin: 0 4px 0 20px; }
  `];
  render() {
    return html`
      <div class="slot">${icon(16, 16, "0 0 16 16", svg`<path stroke="none" fill="#fff" d="M0 2.300L6.500 1.300V7.500H0ZM7.300 1.200L16 0V7.500H7.300ZM0 8.400H6.500V14.700L0 13.700ZM7.300 8.400H16V16L7.300 14.800Z"/>`)}</div>
      <div class="slot">${icon(23, 23, "0 0 23 23", svg`<ellipse cx="13.500" cy="9" rx="8" ry="8" stroke-width="2"/><path d="M8 15L1 22" stroke-width="2.200"/>`)}</div>
      ${apps.map((a, i) => html`<div class="app ${i === 0 ? "first" : ""} ${a.state ?? ""}">${a.art}</div>`)}
      <div class="tray">
        ${icon(12, 7, "0 0 12 7", svg`<path d="M.500 6.500L6 1L11.500 6.500" stroke-width="1.200"/>`)}
        <div style="margin-left:10px">${icon(16, 12, "0 0 16 12", svg`<path d="M5.500 3.500H14.500V10.500H3.500V7M15.500 5.500V8.500M1 0V3M4 0V3M2.500 5V10.500H4M.500 3H4.500V4.500L2.500 6L.500 4.500Z"/><path d="M6.500 5H13.500V9.500H5Z" fill="currentColor" stroke="none"/>`)}</div>
        <div style="margin-left:8px">${icon(17, 14, "0 0 17 14", svg`<path d="M.700 4.500H3L6 1.200V12.800L3 9.500H.700ZM8.500 5Q9.700 7 8.500 9"/><path d="M11 3.500Q13 7 11 10.500M13.500 1.500Q17 7 13.500 12.500" opacity=".45"/>`)}</div>
        <div style="margin-left:9px">${icon(13, 13, "0 0 13 13", svg`<path d="M1 12.500Q1 1 12.500 1M4 12.500Q4 4 12.500 4M7 12.500Q7 7 12.500 7" /><path d="M1 10Q2.500 2.500 12 .800" stroke-dasharray="2 1"/><circle cx="11" cy="11" r="1.600" fill="currentColor" stroke="none"/>`)}</div>
        <div class="two" style="margin-left:10px">${fit("POR", 24)}${fit("PTB2", 27)}</div>
        <div class="two" style="margin-left:10px">${fit("16:24", 27)}${fit("01/12/2024", 59)}</div>
        <div style="margin-left:17px">${icon(17, 16, "0 0 17 16", svg`<path d="M.700 .700H16.300V12.500H10.500L8.500 14.800L6.500 12.500H.700Z" stroke-width="1.200"/>`)}</div>
        <div class="edge"></div>
      </div>`;
  }
}

@customElement("app-root")
class AppRoot extends LitElement {
  static styles = [base, css`
    :host { width: 1920px; height: 1080px; overflow: hidden; background: #010f0b; display: flex; flex-direction: column; }
    .top { display: flex; height: 1040px; }
    .col { flex: 1; min-width: 0; display: flex; flex-direction: column; }
    .body { display: flex; height: 880px; overflow: hidden; }
  `];
  render() {
    return html`
      <div class="top">
        <side-rail></side-rail>
        <div class="col">
          <browser-chrome></browser-chrome>
          <pdf-toolbar></pdf-toolbar>
          <div class="body"><page-thumbs></page-thumbs><pdf-pages></pdf-pages><scroll-track></scroll-track></div>
        </div>
      </div>
      <task-bar></task-bar>`;
  }
}
